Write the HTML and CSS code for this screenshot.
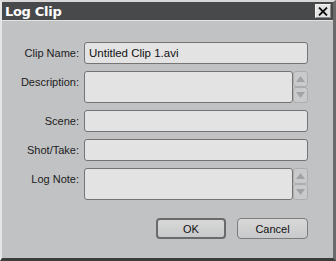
FILE: index.html
```html
<!doctype html>
<html lang="en">
<head>
    <meta charset="UTF-8">
    <title>Log Clip</title>
    <link rel="stylesheet" href="styles.css">
</head>
<body>
<div class="window">
    <div class="titlebar">
        <span class="title">Log Clip</span>
        <span class="close">
            <svg width="10" height="9" viewBox="0 0 10 9"><path d="M1 0.5 L9 8.5 M9 0.5 L1 8.5" stroke="#111" stroke-width="1.8"/></svg>
        </span>
    </div>
    <div class="content">
        <div class="form">
            <label class="label">Clip Name:</label>
            <div class="field">Untitled Clip 1.avi</div>

            <label class="label">Description:</label>
            <div class="multi">
                <div class="field area"></div>
                <div class="spin">
                    <span class="spin-btn"><svg width="9" height="6" viewBox="0 0 9 6"><path d="M4.5 0 L9 6 L0 6 Z" fill="#a3a3a3"/></svg></span>
                    <span class="spin-btn"><svg width="9" height="6" viewBox="0 0 9 6"><path d="M0 0 L9 0 L4.5 6 Z" fill="#a3a3a3"/></svg></span>
                </div>
            </div>

            <label class="label">Scene:</label>
            <div class="field"></div>

            <label class="label">Shot/Take:</label>
            <div class="field"></div>

            <label class="label">Log Note:</label>
            <div class="multi">
                <div class="field area"></div>
                <div class="spin">
                    <span class="spin-btn"><svg width="9" height="6" viewBox="0 0 9 6"><path d="M4.5 0 L9 6 L0 6 Z" fill="#a3a3a3"/></svg></span>
                    <span class="spin-btn"><svg width="9" height="6" viewBox="0 0 9 6"><path d="M0 0 L9 0 L4.5 6 Z" fill="#a3a3a3"/></svg></span>
                </div>
            </div>
        </div>
        <div class="buttons">
            <div class="btn default">OK</div>
            <div class="btn">Cancel</div>
        </div>
    </div>
</div>
</body>
</html>
```

FILE: styles.css
```css
body {
    margin: 0;
    padding: 0;
    font-family: "Liberation Sans", "DejaVu Sans", sans-serif;
    font-size: 11px;
    color: #1c1c1c;
}
.window {
    width: 336px;
    height: 261px;
    box-sizing: border-box;
    background: #c1c2c4;
    border-top: 2px solid #d8d8d8;
    border-left: 2px solid #e6e6e6;
    border-right: 3px solid #6a6a6a;
    border-bottom: 3px solid #3c3c3c;
    display: flex;
    flex-direction: column;
}
.titlebar {
    height: 18px;
    background: #48494b;
    border-bottom: 1px solid #e2e2e2;
    display: flex;
    align-items: center;
    justify-content: space-between;
    padding: 0 2px 0 3px;
}
.title {
    color: #ffffff;
    font-weight: bold;
    font-size: 13px;
    font-family: "DejaVu Sans", "Liberation Sans", sans-serif;
    letter-spacing: -0.3px;
}
.close {
    width: 14px;
    height: 12px;
    background: #e4e4e4;
    border: 1px solid #f4f4f4;
    border-right-color: #8a8a8a;
    border-bottom-color: #8a8a8a;
    display: flex;
    align-items: center;
    justify-content: center;
}
.content {
    flex: 1;
    padding: 21px 25px 0 0;
}
.form {
    display: grid;
    grid-template-columns: 82px 1fr;
    grid-template-rows: 22px 32px 22px 22px 32px;
    row-gap: 7px;
}
.label {
    text-align: right;
    padding-right: 5px;
    padding-top: 5px;
}
.field {
    box-sizing: border-box;
    background: #e3e3e3;
    border: 1px solid #747474;
    border-radius: 3px;
    padding: 4px 0 0 4px;
    font-size: 11.5px;
    color: #111;
}
.multi {
    display: flex;
}
.area {
    flex: 1;
}
.spin {
    width: 15px;
    display: flex;
    flex-direction: column;
}
.spin-btn {
    flex: 1;
    box-sizing: border-box;
    border: 1px solid #adadad;
    border-radius: 3px;
    background: #c9cacc;
    display: flex;
    align-items: center;
    justify-content: center;
}
.buttons {
    display: flex;
    justify-content: flex-end;
    gap: 11px;
    margin-top: 18px;
    padding-right: 0;
}
.btn {
    width: 71px;
    height: 21px;
    box-sizing: border-box;
    border: 1px solid #7c7c7c;
    border-radius: 4px;
    background: linear-gradient(#d8d8d8, #c8c9cb);
    display: flex;
    align-items: center;
    justify-content: center;
    color: #111;
}
.btn.default {
    width: 70px;
    border: 2px solid #6a6a6a;
}
```
